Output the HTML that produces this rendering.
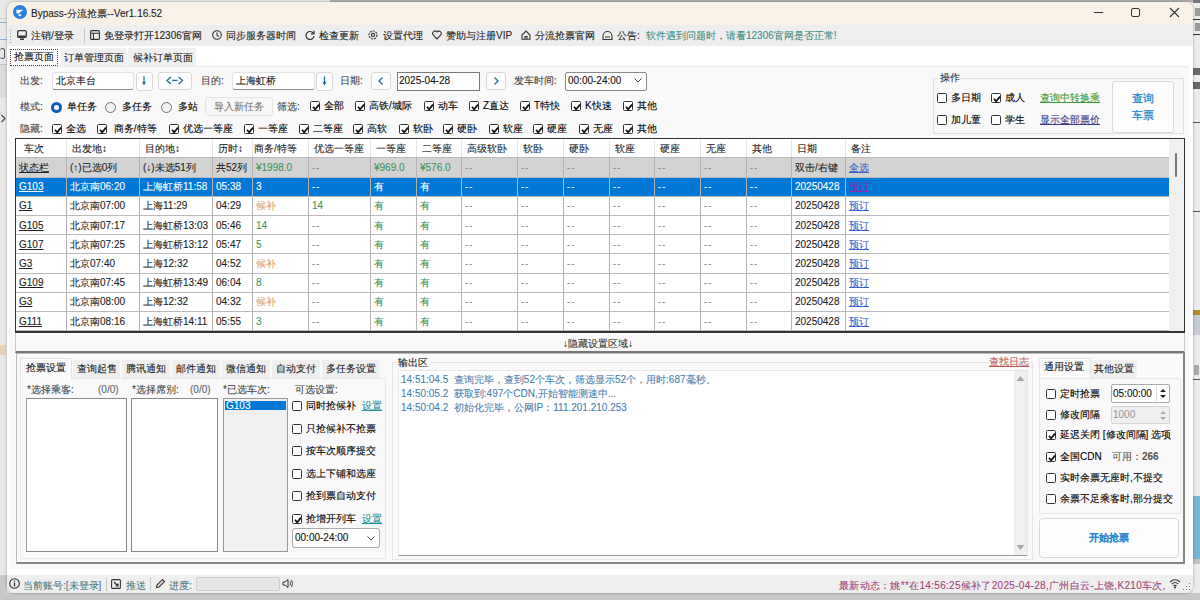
<!DOCTYPE html>
<html><head><meta charset="utf-8"><style>
html,body{margin:0;padding:0;}
body{width:1200px;height:600px;position:relative;overflow:hidden;font-family:"Liberation Sans",sans-serif;font-size:10px;}
div{position:absolute;}
.t{white-space:nowrap;line-height:16px;height:16px;-webkit-text-stroke:0.1px currentColor;}
svg{display:block}
</style></head><body>
<div style="left:0px;top:0px;width:1200px;height:600px;background:#e8e8e8"></div>
<div style="left:0px;top:18px;width:7px;height:1px;background:#cfcfcf"></div>
<div style="left:0px;top:22px;width:7px;height:1px;background:#8fb0d0"></div>
<div style="left:0px;top:39px;width:7px;height:1px;background:#8fb0d0"></div>
<div style="left:0px;top:575px;width:7px;height:25px;background:#c9c9c9"></div>
<div style="left:1193px;top:0px;width:7px;height:600px;background:#ececec"></div>
<div style="left:1193px;top:496px;width:7px;height:63px;background:#74b7d6"></div>
<div style="left:1193px;top:559px;width:7px;height:5px;background:#c2c2c2"></div>
<div style="left:1193px;top:310px;width:7px;height:5px;background:#b58a2a"></div>
<div style="left:1193px;top:315px;width:7px;height:20px;background:#c7ccd4"></div>
<div style="left:0px;top:593px;width:1200px;height:7px;background:#c8c8c8"></div>
<div style="left:330px;top:0px;width:863px;height:2px;background:#b0b0b0"></div>
<div style="left:0px;top:65px;width:7px;height:33px;background:#dcdcdc"></div>
<div style="left:0px;top:64px;width:7px;height:1px;background:#c4c4c4"></div>
<div style="left:0px;top:48px;width:5px;height:11px;border:1px solid #555;border-radius:3px;border-left:none;box-sizing:border-box"></div>
<svg style="position:absolute;left:0px;top:114px" width="7" height="9" viewBox="0 0 7 9"><path d="M1.5 1 L5 4.5 L1.5 8" stroke="#444" stroke-width="1.1" fill="none"/></svg>
<div style="left:0px;top:345px;width:6px;height:10px;background:#e8c8a0;opacity:.7"></div>
<div style="left:1193px;top:19px;width:7px;height:1px;background:#333"></div>
<div style="left:1193px;top:34px;width:7px;height:1px;background:#333"></div>
<div style="left:1195px;top:8px;width:5px;height:8px;background:#9a9a9a"></div>
<div style="left:1195px;top:23px;width:5px;height:8px;background:#9a9a9a"></div>
<div style="left:1193px;top:68px;width:7px;height:7px;background:#6a6a6a"></div>
<div style="left:1193px;top:82px;width:7px;height:7px;background:#6a6a6a"></div>
<div style="left:1193px;top:122px;width:7px;height:1px;background:#555"></div>
<div style="left:1193px;top:211px;width:7px;height:1px;background:#555"></div>
<div style="left:1193px;top:379px;width:7px;height:1px;background:#555"></div>
<div style="left:1194px;top:365px;width:5px;height:10px;background:#aaa"></div>
<div style="left:1193px;top:0px;width:7px;height:3px;background:#777"></div>
<div style="left:7px;top:2px;width:1186px;height:591px;background:#ffffff;border-radius:8px;overflow:hidden;box-shadow:0 0 3px rgba(0,0,0,.35);"></div>
<div style="left:7px;top:2px;width:1186px;height:23px;background:#f7f1e8;border-radius:8px 8px 0 0"></div>
<div style="left:13px;top:5.4px;width:14px;height:14px;border-radius:50%;background:#2a7fd8"><svg width="14" height="14" viewBox="0 0 14 14" style="position:absolute;left:0;top:0"><path d="M3.4 4.8 L10.4 4.8 L5.6 8.4 L3.6 8.4 Z" fill="#fff"/><path d="M5.6 9.2 H8.2 V11.2 H5.6 Z" fill="#d8f4ff"/></svg></div>
<div class="t" style="left:31px;top:5.800000000000001px;font-size:10px;color:#222">Bypass-分流抢票--Ver1.16.52</div>
<div style="left:1094px;top:12px;width:9px;height:1px;background:#333"></div>
<div style="left:1131px;top:8px;width:9px;height:9px;border:1px solid #333;border-radius:2px;box-sizing:border-box"></div>
<svg style="position:absolute;left:1169px;top:7px" width="11" height="11" viewBox="0 0 11 11"><path d="M1 1 L10 10 M10 1 L1 10" stroke="#333" stroke-width="1.1"/></svg>
<div style="left:7px;top:25px;width:1186px;height:21px;background:#eeeeee"></div>
<div style="left:10px;top:30px;width:1px;height:1px;background:#999"></div>
<div style="left:10px;top:33px;width:1px;height:1px;background:#999"></div>
<div style="left:10px;top:36px;width:1px;height:1px;background:#999"></div>
<div style="left:10px;top:39px;width:1px;height:1px;background:#999"></div>
<div style="left:10px;top:42px;width:1px;height:1px;background:#999"></div>
<div style="left:84px;top:28px;width:1px;height:15px;background:#c8c8c8"></div>
<div class="t" style="left:31px;top:27.5px;color:#222">注销/登录</div>
<div class="t" style="left:104px;top:27.5px;color:#222">免登录打开12306官网</div>
<div class="t" style="left:226px;top:27.5px;color:#222">同步服务器时间</div>
<div class="t" style="left:319px;top:27.5px;color:#222">检查更新</div>
<div class="t" style="left:383px;top:27.5px;color:#222">设置代理</div>
<div class="t" style="left:446px;top:27.5px;color:#222">赞助与注册VIP</div>
<div class="t" style="left:535px;top:27.5px;color:#222">分流抢票官网</div>
<div class="t" style="left:617px;top:27.5px;color:#222">公告:</div>
<svg style="position:absolute;left:17px;top:30px" width="10" height="11" viewBox="0 0 10 11"><rect x="0.7" y="0.7" width="8.6" height="6.6" rx="1.2" fill="none" stroke="#333" stroke-width="1.3"/><rect x="1.5" y="5.5" width="7" height="2" fill="#333"/><rect x="3" y="8.5" width="4" height="1.5" fill="#333"/></svg>
<svg style="position:absolute;left:90px;top:30px" width="10" height="10" viewBox="0 0 10 10"><rect x="0.6" y="0.6" width="8.8" height="8.8" rx="1" fill="none" stroke="#333" stroke-width="1.1"/><path d="M0.6 3.3 H9.4 M3.5 3.3 V9.4" stroke="#333" stroke-width="1.1"/></svg>
<svg style="position:absolute;left:212px;top:30px" width="10" height="10" viewBox="0 0 10 10"><circle cx="5" cy="5" r="4.3" fill="none" stroke="#333" stroke-width="1.1"/><path d="M5 2.5 V5.2 L6.8 6.5" stroke="#333" stroke-width="1.1" fill="none"/></svg>
<svg style="position:absolute;left:305px;top:30px" width="10" height="10" viewBox="0 0 10 10"><path d="M8.5 3.5 A4 4 0 1 0 9 6" fill="none" stroke="#333" stroke-width="1.2"/><path d="M9 0.8 V3.8 H6" fill="none" stroke="#333" stroke-width="1.2"/></svg>
<svg style="position:absolute;left:368px;top:30px" width="10" height="10" viewBox="0 0 10 10"><circle cx="5" cy="5" r="4" fill="none" stroke="#333" stroke-width="1.1" stroke-dasharray="2 1"/><circle cx="5" cy="5" r="1.6" fill="none" stroke="#333" stroke-width="1.1"/></svg>
<svg style="position:absolute;left:432px;top:30px" width="10" height="10" viewBox="0 0 10 10"><path d="M5 9 L1.2 5 A2.3 2.3 0 0 1 5 2 A2.3 2.3 0 0 1 8.8 5 Z" fill="none" stroke="#333" stroke-width="1.1"/></svg>
<svg style="position:absolute;left:521px;top:30px" width="10" height="10" viewBox="0 0 10 10"><path d="M1 5 L5 1 L9 5 V9.3 H1 Z M4 9.3 V6.5 H6 V9.3" fill="none" stroke="#333" stroke-width="1.1"/></svg>
<svg style="position:absolute;left:602px;top:30px" width="11" height="11" viewBox="0 0 11 11"><path d="M1 6 A4.5 4.5 0 0 1 10 6 V9.5 H1 Z" fill="none" stroke="#333" stroke-width="1.1"/><path d="M3 7 H8" stroke="#333" stroke-width="1"/></svg>
<div class="t" style="left:646px;top:27.5px;color:#3f8f84">软件遇到问题时，请看12306官网是否正常!</div>
<div style="left:10px;top:49px;width:48px;height:17px;background:#fff;border:1px dotted #444;box-sizing:border-box"></div>
<div class="t" style="left:14px;top:49px;color:#111">抢票页面</div>
<div style="left:60px;top:48px;width:67px;height:18px;background:#f0f0f0"></div>
<div class="t" style="left:64px;top:50px;color:#222">订单管理页面</div>
<div style="left:128px;top:48px;width:68px;height:18px;background:#f0f0f0"></div>
<div class="t" style="left:133px;top:50px;color:#222">候补订单页面</div>
<div style="left:9px;top:66px;width:1180px;height:503px;background:#f9f9f9;border-top:1px solid #ececec;box-sizing:border-box"></div>
<div class="t" style="left:20px;top:73px;color:#444">出发:</div>
<div style="left:52px;top:72px;width:82px;height:18px;background:#fff;border:1px solid #e3e3e3;border-bottom:1px solid #8a8a8a;border-radius:3px;box-sizing:border-box;"></div>
<div class="t" style="left:56px;top:73px;color:#111">北京丰台</div>
<div style="left:135.5px;top:72.4px;width:17px;height:18.2px;background:#fdfdfd;border:1px solid #dadada;border-radius:3px;box-sizing:border-box;"><svg width="15" height="16" viewBox="0 0 15 16" style="position:absolute;left:0;top:0"><path d="M7 3.3 V10" stroke="#1a6e8e" stroke-width="1.2" fill="none"/><path d="M4.8 8.4 L7 12.6 L9.2 8.4 L7 9.4 Z" fill="#1a6e8e"/></svg></div>
<div style="left:158.3px;top:72.4px;width:34.1px;height:17.8px;background:#fdfdfd;border:1px solid #dadada;border-radius:3px;box-sizing:border-box;"><svg width="33" height="16" viewBox="0 0 33 16" style="position:absolute;left:0;top:0"><path d="M11.9 4 L7.9 7.5 L11.9 11 M13.2 7.3 H18.5 M19.6 4 L23.6 7.5 L19.6 11" stroke="#1a6e8e" stroke-width="1.2" fill="none"/></svg></div>
<div class="t" style="left:201px;top:73px;color:#444">目的:</div>
<div style="left:232px;top:72px;width:83px;height:18px;background:#fff;border:1px solid #e3e3e3;border-bottom:1px solid #8a8a8a;border-radius:3px;box-sizing:border-box;"></div>
<div class="t" style="left:236px;top:73px;color:#111">上海虹桥</div>
<div style="left:315.6px;top:72.4px;width:17.7px;height:18.2px;background:#fdfdfd;border:1px solid #dadada;border-radius:3px;box-sizing:border-box;"><svg width="16" height="16" viewBox="0 0 16 16" style="position:absolute;left:0;top:0"><path d="M7.5 3.3 V10" stroke="#1a6e8e" stroke-width="1.2" fill="none"/><path d="M5.3 8.4 L7.5 12.6 L9.7 8.4 L7.5 9.4 Z" fill="#1a6e8e"/></svg></div>
<div class="t" style="left:340px;top:73px;color:#444">日期:</div>
<div style="left:371px;top:72px;width:20px;height:18px;background:#fdfdfd;border:1px solid #dadada;border-radius:3px;box-sizing:border-box;"><svg width="18" height="16" viewBox="0 0 18 16" style="position:absolute;left:0;top:0"><path d="M10.5 4.5 L7 8 L10.5 11.5" stroke="#1a6e8e" stroke-width="1.3" fill="none"/></svg></div>
<div style="left:397px;top:72px;width:83px;height:19px;background:#fff;border:1px solid #7a7a7a;box-sizing:border-box"></div>
<div class="t" style="left:399px;top:73px;color:#111">2025-04-28</div>
<div style="left:486px;top:72px;width:20px;height:18px;background:#fdfdfd;border:1px solid #dadada;border-radius:3px;box-sizing:border-box;"><svg width="18" height="16" viewBox="0 0 18 16" style="position:absolute;left:0;top:0"><path d="M7.5 4.5 L11 8 L7.5 11.5" stroke="#1a6e8e" stroke-width="1.3" fill="none"/></svg></div>
<div class="t" style="left:514px;top:73px;color:#444">发车时间:</div>
<div style="left:565px;top:72px;width:82px;height:19px;background:#fff;border:1px solid #8a8a8a;border-radius:2px;box-sizing:border-box"></div>
<div class="t" style="left:568px;top:73px;color:#111">00:00-24:00</div>
<svg style="position:absolute;left:634px;top:78px" width="8" height="5" viewBox="0 0 8 5"><path d="M0.5 0.5 L4 4 L7.5 0.5" stroke="#444" fill="none" stroke-width="1"/></svg>
<div class="t" style="left:20px;top:99px;color:#444">模式:</div>
<div style="left:51px;top:101.5px;width:11px;height:11px;border-radius:50%;background:#0a5fb4;"><div style="left:3px;top:3px;width:5px;height:5px;border-radius:50%;background:#fff"></div></div>
<div class="t" style="left:67px;top:99px;">单任务</div>
<div style="left:105px;top:101.5px;width:11px;height:11px;border-radius:50%;border:1.4px solid #707070;box-sizing:border-box;background:#f2f2f2"></div>
<div class="t" style="left:122px;top:99px;">多任务</div>
<div style="left:161px;top:101.5px;width:11px;height:11px;border-radius:50%;border:1.4px solid #707070;box-sizing:border-box;background:#f2f2f2"></div>
<div class="t" style="left:178px;top:99px;">多站</div>
<div style="left:205px;top:97px;width:68px;height:19px;background:#f7f7f7;border:1px solid #e4e4e4;border-radius:3px;box-sizing:border-box"></div>
<div class="t" style="left:214px;top:99px;color:#777;font-size:10px">导入新任务</div>
<div class="t" style="left:277px;top:99px;color:#444">筛选:</div>
<div style="left:310px;top:101px;width:10px;height:10px;border:1.2px solid #333;border-radius:1.5px;box-sizing:border-box;background:#fff;"><svg width="10" height="10" viewBox="0 0 10 10" style="position:absolute;left:0;top:0"><path d="M2 4.8 L4.1 7.3 L8 2.6" stroke="#111" stroke-width="1.7" fill="none"/></svg></div>
<div class="t" style="left:324px;top:98px;">全部</div>
<div style="left:355px;top:101px;width:10px;height:10px;border:1.2px solid #333;border-radius:1.5px;box-sizing:border-box;background:#fff;"><svg width="10" height="10" viewBox="0 0 10 10" style="position:absolute;left:0;top:0"><path d="M2 4.8 L4.1 7.3 L8 2.6" stroke="#111" stroke-width="1.7" fill="none"/></svg></div>
<div class="t" style="left:369px;top:98px;">高铁/城际</div>
<div style="left:424px;top:101px;width:10px;height:10px;border:1.2px solid #333;border-radius:1.5px;box-sizing:border-box;background:#fff;"><svg width="10" height="10" viewBox="0 0 10 10" style="position:absolute;left:0;top:0"><path d="M2 4.8 L4.1 7.3 L8 2.6" stroke="#111" stroke-width="1.7" fill="none"/></svg></div>
<div class="t" style="left:438px;top:98px;">动车</div>
<div style="left:469px;top:101px;width:10px;height:10px;border:1.2px solid #333;border-radius:1.5px;box-sizing:border-box;background:#fff;"><svg width="10" height="10" viewBox="0 0 10 10" style="position:absolute;left:0;top:0"><path d="M2 4.8 L4.1 7.3 L8 2.6" stroke="#111" stroke-width="1.7" fill="none"/></svg></div>
<div class="t" style="left:483px;top:98px;">Z直达</div>
<div style="left:520px;top:101px;width:10px;height:10px;border:1.2px solid #333;border-radius:1.5px;box-sizing:border-box;background:#fff;"><svg width="10" height="10" viewBox="0 0 10 10" style="position:absolute;left:0;top:0"><path d="M2 4.8 L4.1 7.3 L8 2.6" stroke="#111" stroke-width="1.7" fill="none"/></svg></div>
<div class="t" style="left:534px;top:98px;">T特快</div>
<div style="left:571px;top:101px;width:10px;height:10px;border:1.2px solid #333;border-radius:1.5px;box-sizing:border-box;background:#fff;"><svg width="10" height="10" viewBox="0 0 10 10" style="position:absolute;left:0;top:0"><path d="M2 4.8 L4.1 7.3 L8 2.6" stroke="#111" stroke-width="1.7" fill="none"/></svg></div>
<div class="t" style="left:585px;top:98px;">K快速</div>
<div style="left:623px;top:101px;width:10px;height:10px;border:1.2px solid #333;border-radius:1.5px;box-sizing:border-box;background:#fff;"><svg width="10" height="10" viewBox="0 0 10 10" style="position:absolute;left:0;top:0"><path d="M2 4.8 L4.1 7.3 L8 2.6" stroke="#111" stroke-width="1.7" fill="none"/></svg></div>
<div class="t" style="left:637px;top:98px;">其他</div>
<div class="t" style="left:20px;top:120.5px;color:#444">隐藏:</div>
<div style="left:52px;top:123.5px;width:10px;height:10px;border:1.2px solid #333;border-radius:1.5px;box-sizing:border-box;background:#fff;"><svg width="10" height="10" viewBox="0 0 10 10" style="position:absolute;left:0;top:0"><path d="M2 4.8 L4.1 7.3 L8 2.6" stroke="#111" stroke-width="1.7" fill="none"/></svg></div>
<div class="t" style="left:66px;top:120.5px;">全选</div>
<div style="left:97px;top:123.5px;width:10px;height:10px;border:1.2px solid #333;border-radius:1.5px;box-sizing:border-box;background:#fff;"><svg width="10" height="10" viewBox="0 0 10 10" style="position:absolute;left:0;top:0"><path d="M2 4.8 L4.1 7.3 L8 2.6" stroke="#111" stroke-width="1.7" fill="none"/></svg></div>
<div class="t" style="left:111px;top:120.5px;">&nbsp;商务/特等</div>
<div style="left:169px;top:123.5px;width:10px;height:10px;border:1.2px solid #333;border-radius:1.5px;box-sizing:border-box;background:#fff;"><svg width="10" height="10" viewBox="0 0 10 10" style="position:absolute;left:0;top:0"><path d="M2 4.8 L4.1 7.3 L8 2.6" stroke="#111" stroke-width="1.7" fill="none"/></svg></div>
<div class="t" style="left:183px;top:120.5px;">优选一等座</div>
<div style="left:244px;top:123.5px;width:10px;height:10px;border:1.2px solid #333;border-radius:1.5px;box-sizing:border-box;background:#fff;"><svg width="10" height="10" viewBox="0 0 10 10" style="position:absolute;left:0;top:0"><path d="M2 4.8 L4.1 7.3 L8 2.6" stroke="#111" stroke-width="1.7" fill="none"/></svg></div>
<div class="t" style="left:258px;top:120.5px;">一等座</div>
<div style="left:299px;top:123.5px;width:10px;height:10px;border:1.2px solid #333;border-radius:1.5px;box-sizing:border-box;background:#fff;"><svg width="10" height="10" viewBox="0 0 10 10" style="position:absolute;left:0;top:0"><path d="M2 4.8 L4.1 7.3 L8 2.6" stroke="#111" stroke-width="1.7" fill="none"/></svg></div>
<div class="t" style="left:313px;top:120.5px;">二等座</div>
<div style="left:353px;top:123.5px;width:10px;height:10px;border:1.2px solid #333;border-radius:1.5px;box-sizing:border-box;background:#fff;"><svg width="10" height="10" viewBox="0 0 10 10" style="position:absolute;left:0;top:0"><path d="M2 4.8 L4.1 7.3 L8 2.6" stroke="#111" stroke-width="1.7" fill="none"/></svg></div>
<div class="t" style="left:367px;top:120.5px;">高软</div>
<div style="left:399px;top:123.5px;width:10px;height:10px;border:1.2px solid #333;border-radius:1.5px;box-sizing:border-box;background:#fff;"><svg width="10" height="10" viewBox="0 0 10 10" style="position:absolute;left:0;top:0"><path d="M2 4.8 L4.1 7.3 L8 2.6" stroke="#111" stroke-width="1.7" fill="none"/></svg></div>
<div class="t" style="left:413px;top:120.5px;">软卧</div>
<div style="left:443px;top:123.5px;width:10px;height:10px;border:1.2px solid #333;border-radius:1.5px;box-sizing:border-box;background:#fff;"><svg width="10" height="10" viewBox="0 0 10 10" style="position:absolute;left:0;top:0"><path d="M2 4.8 L4.1 7.3 L8 2.6" stroke="#111" stroke-width="1.7" fill="none"/></svg></div>
<div class="t" style="left:457px;top:120.5px;">硬卧</div>
<div style="left:489px;top:123.5px;width:10px;height:10px;border:1.2px solid #333;border-radius:1.5px;box-sizing:border-box;background:#fff;"><svg width="10" height="10" viewBox="0 0 10 10" style="position:absolute;left:0;top:0"><path d="M2 4.8 L4.1 7.3 L8 2.6" stroke="#111" stroke-width="1.7" fill="none"/></svg></div>
<div class="t" style="left:503px;top:120.5px;">软座</div>
<div style="left:533px;top:123.5px;width:10px;height:10px;border:1.2px solid #333;border-radius:1.5px;box-sizing:border-box;background:#fff;"><svg width="10" height="10" viewBox="0 0 10 10" style="position:absolute;left:0;top:0"><path d="M2 4.8 L4.1 7.3 L8 2.6" stroke="#111" stroke-width="1.7" fill="none"/></svg></div>
<div class="t" style="left:547px;top:120.5px;">硬座</div>
<div style="left:579px;top:123.5px;width:10px;height:10px;border:1.2px solid #333;border-radius:1.5px;box-sizing:border-box;background:#fff;"><svg width="10" height="10" viewBox="0 0 10 10" style="position:absolute;left:0;top:0"><path d="M2 4.8 L4.1 7.3 L8 2.6" stroke="#111" stroke-width="1.7" fill="none"/></svg></div>
<div class="t" style="left:593px;top:120.5px;">无座</div>
<div style="left:623px;top:123.5px;width:10px;height:10px;border:1.2px solid #333;border-radius:1.5px;box-sizing:border-box;background:#fff;"><svg width="10" height="10" viewBox="0 0 10 10" style="position:absolute;left:0;top:0"><path d="M2 4.8 L4.1 7.3 L8 2.6" stroke="#111" stroke-width="1.7" fill="none"/></svg></div>
<div class="t" style="left:637px;top:120.5px;">其他</div>
<div style="left:933px;top:78px;width:251px;height:56px;border:1px solid #e0e0e0;box-sizing:border-box"></div>
<div style="left:938px;top:71px;width:22px;height:12px;background:#f9f9f9"></div>
<div class="t" style="left:940px;top:70px;color:#333">操作</div>
<div style="left:937px;top:93px;width:10px;height:10px;border:1.2px solid #333;border-radius:1.5px;box-sizing:border-box;background:#fff;"></div>
<div class="t" style="left:951px;top:90px;">多日期</div>
<div style="left:991px;top:93px;width:10px;height:10px;border:1.2px solid #333;border-radius:1.5px;box-sizing:border-box;background:#fff;"><svg width="10" height="10" viewBox="0 0 10 10" style="position:absolute;left:0;top:0"><path d="M2 4.8 L4.1 7.3 L8 2.6" stroke="#111" stroke-width="1.7" fill="none"/></svg></div>
<div class="t" style="left:1005px;top:90px;">成人</div>
<div style="left:937px;top:115px;width:10px;height:10px;border:1.2px solid #333;border-radius:1.5px;box-sizing:border-box;background:#fff;"></div>
<div class="t" style="left:951px;top:112px;">加儿童</div>
<div style="left:991px;top:115px;width:10px;height:10px;border:1.2px solid #333;border-radius:1.5px;box-sizing:border-box;background:#fff;"></div>
<div class="t" style="left:1005px;top:112px;">学生</div>
<div class="t" style="left:1040px;top:90px;color:#3a9a3a;text-decoration:underline">查询中转换乘</div>
<div class="t" style="left:1040px;top:112px;color:#3a3a8a;text-decoration:underline">显示全部票价</div>
<div style="left:1112px;top:81px;width:62px;height:52px;background:#fdfdfd;border:1px solid #dadada;border-radius:3px;box-sizing:border-box;"><div class="t" style="left:0;top:8px;width:60px;text-align:center;color:#2b8ad0;line-height:17px;font-size:11px;-webkit-text-stroke:0.3px #2b8ad0;height:auto">查询<br>车票</div></div>
<div style="left:15px;top:138px;width:1170px;height:195px;background:#fff;border:1px solid #333;border-bottom:2px solid #333;box-sizing:border-box"></div>
<div class="t" style="left:23.5px;top:141px;color:#222">车次</div>
<div class="t" style="left:72px;top:141px;color:#222">出发地↕</div>
<div style="left:66px;top:140px;width:1px;height:17px;background:#e6e6e6"></div>
<div class="t" style="left:145px;top:141px;color:#222">目的地↕</div>
<div style="left:139px;top:140px;width:1px;height:17px;background:#e6e6e6"></div>
<div class="t" style="left:218px;top:141px;color:#222">历时↕</div>
<div style="left:212px;top:140px;width:1px;height:17px;background:#e6e6e6"></div>
<div class="t" style="left:254px;top:141px;color:#222">商务/特等</div>
<div style="left:252px;top:140px;width:1px;height:17px;background:#e6e6e6"></div>
<div class="t" style="left:314px;top:141px;color:#222">优选一等座</div>
<div style="left:308px;top:140px;width:1px;height:17px;background:#e6e6e6"></div>
<div class="t" style="left:376px;top:141px;color:#222">一等座</div>
<div style="left:370px;top:140px;width:1px;height:17px;background:#e6e6e6"></div>
<div class="t" style="left:422px;top:141px;color:#222">二等座</div>
<div style="left:416px;top:140px;width:1px;height:17px;background:#e6e6e6"></div>
<div class="t" style="left:467px;top:141px;color:#222">高级软卧</div>
<div style="left:461px;top:140px;width:1px;height:17px;background:#e6e6e6"></div>
<div class="t" style="left:523px;top:141px;color:#222">软卧</div>
<div style="left:517px;top:140px;width:1px;height:17px;background:#e6e6e6"></div>
<div class="t" style="left:569px;top:141px;color:#222">硬卧</div>
<div style="left:563px;top:140px;width:1px;height:17px;background:#e6e6e6"></div>
<div class="t" style="left:615px;top:141px;color:#222">软座</div>
<div style="left:609px;top:140px;width:1px;height:17px;background:#e6e6e6"></div>
<div class="t" style="left:660px;top:141px;color:#222">硬座</div>
<div style="left:654px;top:140px;width:1px;height:17px;background:#e6e6e6"></div>
<div class="t" style="left:706px;top:141px;color:#222">无座</div>
<div style="left:700px;top:140px;width:1px;height:17px;background:#e6e6e6"></div>
<div class="t" style="left:752px;top:141px;color:#222">其他</div>
<div style="left:746px;top:140px;width:1px;height:17px;background:#e6e6e6"></div>
<div class="t" style="left:797px;top:141px;color:#222">日期</div>
<div style="left:791px;top:140px;width:1px;height:17px;background:#e6e6e6"></div>
<div class="t" style="left:851px;top:141px;color:#222">备注</div>
<div style="left:845px;top:140px;width:1px;height:17px;background:#e6e6e6"></div>
<div style="left:16px;top:157px;width:1153px;height:20px;background:#d3d3d3"></div>
<div class="t" style="left:19px;top:159.5px;color:#222;text-decoration:underline">状态栏</div>
<div class="t" style="left:70px;top:159.5px;color:#222">(↑)已选0列</div>
<div class="t" style="left:143px;top:159.5px;color:#222">(↓)未选51列</div>
<div class="t" style="left:216px;top:159.5px;color:#222">共52列</div>
<div class="t" style="left:256px;top:159.5px;color:#3d9660">¥1998.0</div>
<div class="t" style="left:312px;top:159.5px;color:#8a8a8a;font-size:9px;letter-spacing:1.2px">--</div>
<div class="t" style="left:374px;top:159.5px;color:#3d9660">¥969.0</div>
<div class="t" style="left:420px;top:159.5px;color:#3d9660">¥576.0</div>
<div class="t" style="left:465px;top:159.5px;color:#8a8a8a;font-size:9px;letter-spacing:1.2px">--</div>
<div class="t" style="left:521px;top:159.5px;color:#8a8a8a;font-size:9px;letter-spacing:1.2px">--</div>
<div class="t" style="left:567px;top:159.5px;color:#8a8a8a;font-size:9px;letter-spacing:1.2px">--</div>
<div class="t" style="left:613px;top:159.5px;color:#8a8a8a;font-size:9px;letter-spacing:1.2px">--</div>
<div class="t" style="left:658px;top:159.5px;color:#8a8a8a;font-size:9px;letter-spacing:1.2px">--</div>
<div class="t" style="left:704px;top:159.5px;color:#8a8a8a;font-size:9px;letter-spacing:1.2px">--</div>
<div class="t" style="left:750px;top:159.5px;color:#8a8a8a;font-size:9px;letter-spacing:1.2px">--</div>
<div class="t" style="left:795px;top:159.5px;color:#222">双击/右键</div>
<div class="t" style="left:849px;top:159.5px;color:#3b5fc8;text-decoration:underline">全选</div>
<div style="left:16px;top:176.6px;width:1153px;height:19.2px;background:#0078d7"></div>
<div class="t" style="left:19px;top:179.1px;color:#fff;text-decoration:underline">G103</div>
<div class="t" style="left:70px;top:179.1px;color:#fff">北京南06:20</div>
<div class="t" style="left:143px;top:179.1px;color:#fff">上海虹桥11:58</div>
<div class="t" style="left:216px;top:179.1px;color:#fff">05:38</div>
<div class="t" style="left:256px;top:179.1px;color:#fff">3</div>
<div class="t" style="left:312px;top:179.1px;color:#fff;font-size:9px;letter-spacing:1.2px">--</div>
<div class="t" style="left:374px;top:179.1px;color:#fff">有</div>
<div class="t" style="left:420px;top:179.1px;color:#fff">有</div>
<div class="t" style="left:465px;top:179.1px;color:#fff;font-size:9px;letter-spacing:1.2px">--</div>
<div class="t" style="left:521px;top:179.1px;color:#fff;font-size:9px;letter-spacing:1.2px">--</div>
<div class="t" style="left:567px;top:179.1px;color:#fff;font-size:9px;letter-spacing:1.2px">--</div>
<div class="t" style="left:613px;top:179.1px;color:#fff;font-size:9px;letter-spacing:1.2px">--</div>
<div class="t" style="left:658px;top:179.1px;color:#fff;font-size:9px;letter-spacing:1.2px">--</div>
<div class="t" style="left:704px;top:179.1px;color:#fff;font-size:9px;letter-spacing:1.2px">--</div>
<div class="t" style="left:750px;top:179.1px;color:#fff;font-size:9px;letter-spacing:1.2px">--</div>
<div class="t" style="left:795px;top:179.1px;color:#fff">20250428</div>
<div class="t" style="left:849px;top:179.1px;color:#8a2bb0;text-decoration:underline">预订</div>
<div class="t" style="left:19px;top:198.3px;color:#222;text-decoration:underline">G1</div>
<div class="t" style="left:70px;top:198.3px;color:#222">北京南07:00</div>
<div class="t" style="left:143px;top:198.3px;color:#222">上海11:29</div>
<div class="t" style="left:216px;top:198.3px;color:#222">04:29</div>
<div class="t" style="left:256px;top:198.3px;color:#e0a070">候补</div>
<div class="t" style="left:312px;top:198.3px;color:#3d9660">14</div>
<div class="t" style="left:374px;top:198.3px;color:#3d9660">有</div>
<div class="t" style="left:420px;top:198.3px;color:#3d9660">有</div>
<div class="t" style="left:465px;top:198.3px;color:#8a8a8a;font-size:9px;letter-spacing:1.2px">--</div>
<div class="t" style="left:521px;top:198.3px;color:#8a8a8a;font-size:9px;letter-spacing:1.2px">--</div>
<div class="t" style="left:567px;top:198.3px;color:#8a8a8a;font-size:9px;letter-spacing:1.2px">--</div>
<div class="t" style="left:613px;top:198.3px;color:#8a8a8a;font-size:9px;letter-spacing:1.2px">--</div>
<div class="t" style="left:658px;top:198.3px;color:#8a8a8a;font-size:9px;letter-spacing:1.2px">--</div>
<div class="t" style="left:704px;top:198.3px;color:#8a8a8a;font-size:9px;letter-spacing:1.2px">--</div>
<div class="t" style="left:750px;top:198.3px;color:#8a8a8a;font-size:9px;letter-spacing:1.2px">--</div>
<div class="t" style="left:795px;top:198.3px;color:#222">20250428</div>
<div class="t" style="left:849px;top:198.3px;color:#3b5fc8;text-decoration:underline">预订</div>
<div class="t" style="left:19px;top:217.5px;color:#222;text-decoration:underline">G105</div>
<div class="t" style="left:70px;top:217.5px;color:#222">北京南07:17</div>
<div class="t" style="left:143px;top:217.5px;color:#222">上海虹桥13:03</div>
<div class="t" style="left:216px;top:217.5px;color:#222">05:46</div>
<div class="t" style="left:256px;top:217.5px;color:#3d9660">14</div>
<div class="t" style="left:312px;top:217.5px;color:#8a8a8a;font-size:9px;letter-spacing:1.2px">--</div>
<div class="t" style="left:374px;top:217.5px;color:#3d9660">有</div>
<div class="t" style="left:420px;top:217.5px;color:#3d9660">有</div>
<div class="t" style="left:465px;top:217.5px;color:#8a8a8a;font-size:9px;letter-spacing:1.2px">--</div>
<div class="t" style="left:521px;top:217.5px;color:#8a8a8a;font-size:9px;letter-spacing:1.2px">--</div>
<div class="t" style="left:567px;top:217.5px;color:#8a8a8a;font-size:9px;letter-spacing:1.2px">--</div>
<div class="t" style="left:613px;top:217.5px;color:#8a8a8a;font-size:9px;letter-spacing:1.2px">--</div>
<div class="t" style="left:658px;top:217.5px;color:#8a8a8a;font-size:9px;letter-spacing:1.2px">--</div>
<div class="t" style="left:704px;top:217.5px;color:#8a8a8a;font-size:9px;letter-spacing:1.2px">--</div>
<div class="t" style="left:750px;top:217.5px;color:#8a8a8a;font-size:9px;letter-spacing:1.2px">--</div>
<div class="t" style="left:795px;top:217.5px;color:#222">20250428</div>
<div class="t" style="left:849px;top:217.5px;color:#3b5fc8;text-decoration:underline">预订</div>
<div class="t" style="left:19px;top:236.7px;color:#222;text-decoration:underline">G107</div>
<div class="t" style="left:70px;top:236.7px;color:#222">北京南07:25</div>
<div class="t" style="left:143px;top:236.7px;color:#222">上海虹桥13:12</div>
<div class="t" style="left:216px;top:236.7px;color:#222">05:47</div>
<div class="t" style="left:256px;top:236.7px;color:#3d9660">5</div>
<div class="t" style="left:312px;top:236.7px;color:#8a8a8a;font-size:9px;letter-spacing:1.2px">--</div>
<div class="t" style="left:374px;top:236.7px;color:#3d9660">有</div>
<div class="t" style="left:420px;top:236.7px;color:#3d9660">有</div>
<div class="t" style="left:465px;top:236.7px;color:#8a8a8a;font-size:9px;letter-spacing:1.2px">--</div>
<div class="t" style="left:521px;top:236.7px;color:#8a8a8a;font-size:9px;letter-spacing:1.2px">--</div>
<div class="t" style="left:567px;top:236.7px;color:#8a8a8a;font-size:9px;letter-spacing:1.2px">--</div>
<div class="t" style="left:613px;top:236.7px;color:#8a8a8a;font-size:9px;letter-spacing:1.2px">--</div>
<div class="t" style="left:658px;top:236.7px;color:#8a8a8a;font-size:9px;letter-spacing:1.2px">--</div>
<div class="t" style="left:704px;top:236.7px;color:#8a8a8a;font-size:9px;letter-spacing:1.2px">--</div>
<div class="t" style="left:750px;top:236.7px;color:#8a8a8a;font-size:9px;letter-spacing:1.2px">--</div>
<div class="t" style="left:795px;top:236.7px;color:#222">20250428</div>
<div class="t" style="left:849px;top:236.7px;color:#3b5fc8;text-decoration:underline">预订</div>
<div class="t" style="left:19px;top:255.89999999999998px;color:#222;text-decoration:underline">G3</div>
<div class="t" style="left:70px;top:255.89999999999998px;color:#222">北京07:40</div>
<div class="t" style="left:143px;top:255.89999999999998px;color:#222">上海12:32</div>
<div class="t" style="left:216px;top:255.89999999999998px;color:#222">04:52</div>
<div class="t" style="left:256px;top:255.89999999999998px;color:#e0a070">候补</div>
<div class="t" style="left:312px;top:255.89999999999998px;color:#8a8a8a;font-size:9px;letter-spacing:1.2px">--</div>
<div class="t" style="left:374px;top:255.89999999999998px;color:#3d9660">有</div>
<div class="t" style="left:420px;top:255.89999999999998px;color:#3d9660">有</div>
<div class="t" style="left:465px;top:255.89999999999998px;color:#8a8a8a;font-size:9px;letter-spacing:1.2px">--</div>
<div class="t" style="left:521px;top:255.89999999999998px;color:#8a8a8a;font-size:9px;letter-spacing:1.2px">--</div>
<div class="t" style="left:567px;top:255.89999999999998px;color:#8a8a8a;font-size:9px;letter-spacing:1.2px">--</div>
<div class="t" style="left:613px;top:255.89999999999998px;color:#8a8a8a;font-size:9px;letter-spacing:1.2px">--</div>
<div class="t" style="left:658px;top:255.89999999999998px;color:#8a8a8a;font-size:9px;letter-spacing:1.2px">--</div>
<div class="t" style="left:704px;top:255.89999999999998px;color:#8a8a8a;font-size:9px;letter-spacing:1.2px">--</div>
<div class="t" style="left:750px;top:255.89999999999998px;color:#8a8a8a;font-size:9px;letter-spacing:1.2px">--</div>
<div class="t" style="left:795px;top:255.89999999999998px;color:#222">20250428</div>
<div class="t" style="left:849px;top:255.89999999999998px;color:#3b5fc8;text-decoration:underline">预订</div>
<div class="t" style="left:19px;top:275.1px;color:#222;text-decoration:underline">G109</div>
<div class="t" style="left:70px;top:275.1px;color:#222">北京南07:45</div>
<div class="t" style="left:143px;top:275.1px;color:#222">上海虹桥13:49</div>
<div class="t" style="left:216px;top:275.1px;color:#222">06:04</div>
<div class="t" style="left:256px;top:275.1px;color:#3d9660">8</div>
<div class="t" style="left:312px;top:275.1px;color:#8a8a8a;font-size:9px;letter-spacing:1.2px">--</div>
<div class="t" style="left:374px;top:275.1px;color:#3d9660">有</div>
<div class="t" style="left:420px;top:275.1px;color:#3d9660">有</div>
<div class="t" style="left:465px;top:275.1px;color:#8a8a8a;font-size:9px;letter-spacing:1.2px">--</div>
<div class="t" style="left:521px;top:275.1px;color:#8a8a8a;font-size:9px;letter-spacing:1.2px">--</div>
<div class="t" style="left:567px;top:275.1px;color:#8a8a8a;font-size:9px;letter-spacing:1.2px">--</div>
<div class="t" style="left:613px;top:275.1px;color:#8a8a8a;font-size:9px;letter-spacing:1.2px">--</div>
<div class="t" style="left:658px;top:275.1px;color:#8a8a8a;font-size:9px;letter-spacing:1.2px">--</div>
<div class="t" style="left:704px;top:275.1px;color:#8a8a8a;font-size:9px;letter-spacing:1.2px">--</div>
<div class="t" style="left:750px;top:275.1px;color:#8a8a8a;font-size:9px;letter-spacing:1.2px">--</div>
<div class="t" style="left:795px;top:275.1px;color:#222">20250428</div>
<div class="t" style="left:849px;top:275.1px;color:#3b5fc8;text-decoration:underline">预订</div>
<div class="t" style="left:19px;top:294.3px;color:#222;text-decoration:underline">G3</div>
<div class="t" style="left:70px;top:294.3px;color:#222">北京南08:00</div>
<div class="t" style="left:143px;top:294.3px;color:#222">上海12:32</div>
<div class="t" style="left:216px;top:294.3px;color:#222">04:32</div>
<div class="t" style="left:256px;top:294.3px;color:#e0a070">候补</div>
<div class="t" style="left:312px;top:294.3px;color:#8a8a8a;font-size:9px;letter-spacing:1.2px">--</div>
<div class="t" style="left:374px;top:294.3px;color:#3d9660">有</div>
<div class="t" style="left:420px;top:294.3px;color:#3d9660">有</div>
<div class="t" style="left:465px;top:294.3px;color:#8a8a8a;font-size:9px;letter-spacing:1.2px">--</div>
<div class="t" style="left:521px;top:294.3px;color:#8a8a8a;font-size:9px;letter-spacing:1.2px">--</div>
<div class="t" style="left:567px;top:294.3px;color:#8a8a8a;font-size:9px;letter-spacing:1.2px">--</div>
<div class="t" style="left:613px;top:294.3px;color:#8a8a8a;font-size:9px;letter-spacing:1.2px">--</div>
<div class="t" style="left:658px;top:294.3px;color:#8a8a8a;font-size:9px;letter-spacing:1.2px">--</div>
<div class="t" style="left:704px;top:294.3px;color:#8a8a8a;font-size:9px;letter-spacing:1.2px">--</div>
<div class="t" style="left:750px;top:294.3px;color:#8a8a8a;font-size:9px;letter-spacing:1.2px">--</div>
<div class="t" style="left:795px;top:294.3px;color:#222">20250428</div>
<div class="t" style="left:849px;top:294.3px;color:#3b5fc8;text-decoration:underline">预订</div>
<div class="t" style="left:19px;top:313.5px;color:#222;text-decoration:underline">G111</div>
<div class="t" style="left:70px;top:313.5px;color:#222">北京南08:16</div>
<div class="t" style="left:143px;top:313.5px;color:#222">上海虹桥14:11</div>
<div class="t" style="left:216px;top:313.5px;color:#222">05:55</div>
<div class="t" style="left:256px;top:313.5px;color:#3d9660">3</div>
<div class="t" style="left:312px;top:313.5px;color:#8a8a8a;font-size:9px;letter-spacing:1.2px">--</div>
<div class="t" style="left:374px;top:313.5px;color:#3d9660">有</div>
<div class="t" style="left:420px;top:313.5px;color:#3d9660">有</div>
<div class="t" style="left:465px;top:313.5px;color:#8a8a8a;font-size:9px;letter-spacing:1.2px">--</div>
<div class="t" style="left:521px;top:313.5px;color:#8a8a8a;font-size:9px;letter-spacing:1.2px">--</div>
<div class="t" style="left:567px;top:313.5px;color:#8a8a8a;font-size:9px;letter-spacing:1.2px">--</div>
<div class="t" style="left:613px;top:313.5px;color:#8a8a8a;font-size:9px;letter-spacing:1.2px">--</div>
<div class="t" style="left:658px;top:313.5px;color:#8a8a8a;font-size:9px;letter-spacing:1.2px">--</div>
<div class="t" style="left:704px;top:313.5px;color:#8a8a8a;font-size:9px;letter-spacing:1.2px">--</div>
<div class="t" style="left:750px;top:313.5px;color:#8a8a8a;font-size:9px;letter-spacing:1.2px">--</div>
<div class="t" style="left:795px;top:313.5px;color:#222">20250428</div>
<div class="t" style="left:849px;top:313.5px;color:#3b5fc8;text-decoration:underline">预订</div>
<div style="left:16px;top:157px;width:1153px;height:1px;background:#bababa"></div>
<div style="left:16px;top:176.6px;width:1153px;height:1px;background:#bababa"></div>
<div style="left:16px;top:195.8px;width:1153px;height:1px;background:#bababa"></div>
<div style="left:16px;top:215.0px;width:1153px;height:1px;background:#bababa"></div>
<div style="left:16px;top:234.2px;width:1153px;height:1px;background:#bababa"></div>
<div style="left:16px;top:253.4px;width:1153px;height:1px;background:#bababa"></div>
<div style="left:16px;top:272.6px;width:1153px;height:1px;background:#bababa"></div>
<div style="left:16px;top:291.8px;width:1153px;height:1px;background:#bababa"></div>
<div style="left:16px;top:311.0px;width:1153px;height:1px;background:#bababa"></div>
<div style="left:16px;top:330px;width:1153px;height:1px;background:#bababa"></div>
<div style="left:66px;top:157px;width:1px;height:174px;background:#b4b4b4"></div>
<div style="left:139px;top:157px;width:1px;height:174px;background:#b4b4b4"></div>
<div style="left:212px;top:157px;width:1px;height:174px;background:#b4b4b4"></div>
<div style="left:252px;top:157px;width:1px;height:174px;background:#b4b4b4"></div>
<div style="left:308px;top:157px;width:1px;height:174px;background:#b4b4b4"></div>
<div style="left:370px;top:157px;width:1px;height:174px;background:#b4b4b4"></div>
<div style="left:416px;top:157px;width:1px;height:174px;background:#b4b4b4"></div>
<div style="left:461px;top:157px;width:1px;height:174px;background:#b4b4b4"></div>
<div style="left:517px;top:157px;width:1px;height:174px;background:#b4b4b4"></div>
<div style="left:563px;top:157px;width:1px;height:174px;background:#b4b4b4"></div>
<div style="left:609px;top:157px;width:1px;height:174px;background:#b4b4b4"></div>
<div style="left:654px;top:157px;width:1px;height:174px;background:#b4b4b4"></div>
<div style="left:700px;top:157px;width:1px;height:174px;background:#b4b4b4"></div>
<div style="left:746px;top:157px;width:1px;height:174px;background:#b4b4b4"></div>
<div style="left:791px;top:157px;width:1px;height:174px;background:#b4b4b4"></div>
<div style="left:845px;top:157px;width:1px;height:174px;background:#b4b4b4"></div>
<div style="left:1169px;top:139px;width:15px;height:192px;background:#f0f0f0"></div>
<div style="left:1175px;top:153px;width:2px;height:24px;background:#777;border-radius:1px"></div>
<div style="left:15px;top:333px;width:1170px;height:20px;background:#f9f9f9;border:1px solid #ccc;border-top:none;border-bottom:2px solid #777;box-sizing:border-box"></div>
<div class="t" style="left:563px;top:335.5px;color:#333">↓隐藏设置区域↓</div>
<div style="left:16px;top:353px;width:1169px;height:211px;background:#fafafa;border:1px solid #bbb;border-bottom:2px solid #858585;border-right:2px solid #858585;box-sizing:border-box"></div>
<div style="left:20px;top:378px;width:366px;height:181px;background:#f9f9f9;border:1px solid #e8e8e8;box-sizing:border-box"></div>
<div style="left:20px;top:358px;width:52px;height:21px;background:#fafafa;border:1px solid #e4e4e4;border-bottom:none;box-sizing:border-box"></div>
<div class="t" style="left:26px;top:360px;color:#111">抢票设置</div>
<div style="left:73px;top:360px;width:47px;height:18px;background:#efefef"></div>
<div class="t" style="left:77px;top:361px;color:#222">查询起售</div>
<div style="left:122px;top:360px;width:48px;height:18px;background:#efefef"></div>
<div class="t" style="left:126px;top:361px;color:#222">腾讯通知</div>
<div style="left:172px;top:360px;width:48px;height:18px;background:#efefef"></div>
<div class="t" style="left:176px;top:361px;color:#222">邮件通知</div>
<div style="left:222px;top:360px;width:48px;height:18px;background:#efefef"></div>
<div class="t" style="left:226px;top:361px;color:#222">微信通知</div>
<div style="left:272px;top:360px;width:48px;height:18px;background:#efefef"></div>
<div class="t" style="left:276px;top:361px;color:#222">自动支付</div>
<div style="left:322px;top:360px;width:57px;height:18px;background:#efefef"></div>
<div class="t" style="left:326px;top:361px;color:#222">多任务设置</div>
<div class="t" style="left:27px;top:382px;color:#444">*选择乘客:</div>
<div class="t" style="left:98px;top:382px;color:#666">(0/0)</div>
<div class="t" style="left:132px;top:382px;color:#444">*选择席别:</div>
<div class="t" style="left:190px;top:382px;color:#666">(0/0)</div>
<div class="t" style="left:223px;top:382px;color:#444">*已选车次:</div>
<div class="t" style="left:295px;top:382px;color:#444">可选设置:</div>
<div style="left:26px;top:398px;width:101px;height:154px;background:#fff;border:1px solid #888;border-left-color:#999;box-sizing:border-box"></div>
<div style="left:131px;top:398px;width:87px;height:154px;background:#fff;border:1px solid #888;box-sizing:border-box"></div>
<div style="left:223px;top:398px;width:65px;height:154px;background:#f0f0f0;border:1px solid #999;box-sizing:border-box"></div>
<div style="left:225px;top:401px;width:61px;height:9px;background:#0078d7"></div>
<div class="t" style="left:226px;top:397.5px;color:#fff;font-size:10px">G103</div>
<div style="left:292px;top:401.0px;width:10px;height:10px;border:1.2px solid #333;border-radius:1.5px;box-sizing:border-box;background:#fff;"></div>
<div class="t" style="left:306px;top:398.0px;">同时抢候补</div>
<div style="left:292px;top:423.5px;width:10px;height:10px;border:1.2px solid #333;border-radius:1.5px;box-sizing:border-box;background:#fff;"></div>
<div class="t" style="left:306px;top:420.5px;">只抢候补不抢票</div>
<div style="left:292px;top:446.0px;width:10px;height:10px;border:1.2px solid #333;border-radius:1.5px;box-sizing:border-box;background:#fff;"></div>
<div class="t" style="left:306px;top:443.0px;">按车次顺序提交</div>
<div style="left:292px;top:468.5px;width:10px;height:10px;border:1.2px solid #333;border-radius:1.5px;box-sizing:border-box;background:#fff;"></div>
<div class="t" style="left:306px;top:465.5px;">选上下铺和选座</div>
<div style="left:292px;top:491.0px;width:10px;height:10px;border:1.2px solid #333;border-radius:1.5px;box-sizing:border-box;background:#fff;"></div>
<div class="t" style="left:306px;top:488.0px;">抢到票自动支付</div>
<div style="left:292px;top:513.5px;width:10px;height:10px;border:1.2px solid #333;border-radius:1.5px;box-sizing:border-box;background:#fff;"><svg width="10" height="10" viewBox="0 0 10 10" style="position:absolute;left:0;top:0"><path d="M2 4.8 L4.1 7.3 L8 2.6" stroke="#111" stroke-width="1.7" fill="none"/></svg></div>
<div class="t" style="left:306px;top:510.5px;">抢增开列车</div>
<div class="t" style="left:362px;top:398px;color:#1f8f9a;text-decoration:underline">设置</div>
<div class="t" style="left:362px;top:510.5px;color:#1f8f9a;text-decoration:underline">设置</div>
<div style="left:292px;top:528px;width:88px;height:20px;background:#fff;border:1px solid #aaa;border-radius:3px;box-sizing:border-box"></div>
<div class="t" style="left:295px;top:530px;color:#111">00:00-24:00</div>
<svg style="position:absolute;left:367px;top:536px" width="8" height="5" viewBox="0 0 8 5"><path d="M0.5 0.5 L4 4 L7.5 0.5" stroke="#444" fill="none" stroke-width="1"/></svg>
<div style="left:392px;top:362px;width:641px;height:198px;border:1px solid #e6e6e6;box-sizing:border-box"></div>
<div style="left:396px;top:356px;width:36px;height:12px;background:#fafafa"></div>
<div class="t" style="left:398px;top:355px;color:#222">输出区</div>
<div style="left:398px;top:370px;width:630px;height:186px;background:#fff;border:1px solid #e6e6e6;border-bottom:1px solid #999;box-sizing:border-box"></div>
<div style="left:1014px;top:371px;width:13px;height:184px;background:#f0f0f0"></div>
<svg style="position:absolute;left:1016px;top:375px" width="9" height="7" viewBox="0 0 9 7"><path d="M0.5 6 L4.5 1 L8.5 6 Z" fill="#a8a8a8"/></svg>
<svg style="position:absolute;left:1016px;top:544px" width="9" height="7" viewBox="0 0 9 7"><path d="M0.5 1 L4.5 6 L8.5 1 Z" fill="#a8a8a8"/></svg>
<div class="t" style="left:989px;top:354px;color:#c05a5a;text-decoration:underline;width:28px">查找日志</div>
<div class="t" style="left:401px;top:371.5px;color:#4b7fae">14:51:04.5&nbsp; 查询完毕，查到52个车次，筛选显示52个，用时:687毫秒。</div>
<div class="t" style="left:401px;top:385.5px;color:#4b7fae">14:50:05.2&nbsp; 获取到:497个CDN,开始智能测速中...</div>
<div class="t" style="left:401px;top:399.5px;color:#4b7fae">14:50:04.2&nbsp; 初始化完毕，公网IP：111.201.210.253</div>
<div style="left:1039px;top:358px;width:52px;height:21px;background:#fafafa;border:1px solid #e4e4e4;border-bottom:none;box-sizing:border-box"></div>
<div class="t" style="left:1044px;top:359px;color:#111">通用设置</div>
<div style="left:1091px;top:360px;width:46px;height:18px;background:#efefef"></div>
<div class="t" style="left:1094px;top:361px;color:#222">其他设置</div>
<div style="left:1039px;top:378px;width:142px;height:136px;background:#f9f9f9;border:1px solid #e8e8e8;box-sizing:border-box"></div>
<div style="left:1046px;top:388.5px;width:10px;height:10px;border:1.2px solid #333;border-radius:1.5px;box-sizing:border-box;background:#fff;"></div>
<div class="t" style="left:1060px;top:385.5px;">定时抢票</div>
<div style="left:1046px;top:410px;width:10px;height:10px;border:1.2px solid #333;border-radius:1.5px;box-sizing:border-box;background:#fff;"></div>
<div class="t" style="left:1060px;top:407px;">修改间隔</div>
<div style="left:1046px;top:430px;width:10px;height:10px;border:1.2px solid #333;border-radius:1.5px;box-sizing:border-box;background:#fff;"><svg width="10" height="10" viewBox="0 0 10 10" style="position:absolute;left:0;top:0"><path d="M2 4.8 L4.1 7.3 L8 2.6" stroke="#111" stroke-width="1.7" fill="none"/></svg></div>
<div class="t" style="left:1060px;top:427px;">延迟关闭 [修改间隔] 选项</div>
<div style="left:1046px;top:451.5px;width:10px;height:10px;border:1.2px solid #333;border-radius:1.5px;box-sizing:border-box;background:#fff;"><svg width="10" height="10" viewBox="0 0 10 10" style="position:absolute;left:0;top:0"><path d="M2 4.8 L4.1 7.3 L8 2.6" stroke="#111" stroke-width="1.7" fill="none"/></svg></div>
<div class="t" style="left:1060px;top:448.5px;">全国CDN</div>
<div class="t" style="left:1112px;top:449px;color:#555">可用：<b>266</b></div>
<div style="left:1046px;top:473px;width:10px;height:10px;border:1.2px solid #333;border-radius:1.5px;box-sizing:border-box;background:#fff;"></div>
<div class="t" style="left:1060px;top:470px;">实时余票无座时,不提交</div>
<div style="left:1046px;top:494px;width:10px;height:10px;border:1.2px solid #333;border-radius:1.5px;box-sizing:border-box;background:#fff;"></div>
<div class="t" style="left:1060px;top:491px;">余票不足乘客时,部分提交</div>
<div style="left:1111px;top:384px;width:59px;height:19px;background:#fff;border:1px solid #aaa;border-radius:2px;box-sizing:border-box"></div>
<div class="t" style="left:1113px;top:385.5px;color:#111">05:00:00</div>
<div style="left:1156px;top:386px;width:12px;height:15px;background:#fff;border-left:1px solid #ddd;"><svg width="12" height="15" viewBox="0 0 12 15" style="position:absolute;left:0;top:0"><path d="M3 6 L6 3 L9 6 Z M3 9 L6 12 L9 9 Z" fill="#222"/></svg></div>
<div style="left:1111px;top:406px;width:59px;height:18px;background:#efefef;border:1px solid #d4d4d4;border-radius:2px;box-sizing:border-box"></div>
<div class="t" style="left:1113px;top:407px;color:#999">1000</div>
<svg style="position:absolute;left:1157px;top:408px" width="12" height="15" viewBox="0 0 12 15"><path d="M3 6 L6 3 L9 6 Z M3 9 L6 12 L9 9 Z" fill="#aaa"/></svg>
<div style="left:1039px;top:518px;width:140px;height:40px;background:#fdfdfd;border:1px solid #dadada;border-radius:3px;box-sizing:border-box;border-radius:4px"><div class="t" style="left:0;top:11px;width:138px;text-align:center;color:#2b8ad0;font-weight:bold">开始抢票</div></div>
<div style="left:7px;top:575px;width:1186px;height:18px;background:#efefef;border-radius:0 0 8px 8px"></div>
<svg style="position:absolute;left:9px;top:578px" width="11" height="11" viewBox="0 0 11 11"><circle cx="5.5" cy="5.5" r="4.8" fill="none" stroke="#333" stroke-width="1.1"/><path d="M5.5 4.5 V8.5" stroke="#333" stroke-width="1.3"/><circle cx="5.5" cy="2.9" r="0.7" fill="#333"/></svg>
<div class="t" style="left:23px;top:577.5px;color:#4d7a80">当前账号:[未登录]</div>
<div style="left:106px;top:578px;width:1px;height:13px;background:#c8c8c8"></div>
<svg style="position:absolute;left:111px;top:579px" width="10" height="10" viewBox="0 0 10 10"><rect x="0.6" y="0.6" width="8.8" height="8.8" rx="1" fill="none" stroke="#333" stroke-width="1.1"/><path d="M3 3 L7 7 M7 4.5 V7 H4.5" stroke="#333" stroke-width="1.2" fill="none"/></svg>
<div class="t" style="left:126px;top:577.5px;color:#4d7a80">推送</div>
<div style="left:150px;top:578px;width:1px;height:13px;background:#c8c8c8"></div>
<svg style="position:absolute;left:155px;top:578px" width="11" height="11" viewBox="0 0 11 11"><path d="M1.5 9.5 L2 7 L7.5 1.5 L9.5 3.5 L4 9 Z" fill="none" stroke="#333" stroke-width="1.1"/></svg>
<div class="t" style="left:169px;top:577.5px;color:#4d7a80">进度:</div>
<div style="left:196px;top:577px;width:84px;height:14px;background:#e6e6e6;border:1px solid #d0d0d0;border-radius:2px;box-sizing:border-box"></div>
<svg style="position:absolute;left:282px;top:578px" width="12" height="11" viewBox="0 0 12 11"><path d="M1 4 H3 L6 1.5 V9.5 L3 7 H1 Z" fill="none" stroke="#333" stroke-width="1"/><path d="M8 3.5 Q9.2 5.5 8 7.5 M9.6 2 Q11.5 5.5 9.6 9" fill="none" stroke="#333" stroke-width="0.9"/></svg>
<div class="t" style="left:839px;top:578px;color:#a0457a;letter-spacing:0.3px">最新动态：姚**在14:56:25候补了2025-04-28,广州白云-上饶,K210车次,</div>
<svg style="position:absolute;left:1169px;top:578px" width="12" height="11" viewBox="0 0 12 11"><path d="M1 4 Q6 -0.5 11 4 M2.8 6 Q6 3 9.2 6 M4.5 8 Q6 6.6 7.5 8" fill="none" stroke="#333" stroke-width="1.1"/><circle cx="6" cy="9.5" r="1" fill="#333"/></svg>
<div style="left:1189px;top:583px;width:1px;height:1px;background:#777"></div>
<div style="left:1186px;top:586px;width:1px;height:1px;background:#777"></div>
<div style="left:1189px;top:586px;width:1px;height:1px;background:#777"></div>
<div style="left:1183px;top:589px;width:1px;height:1px;background:#777"></div>
<div style="left:1186px;top:589px;width:1px;height:1px;background:#777"></div>
<div style="left:1189px;top:589px;width:1px;height:1px;background:#777"></div>
</body></html>
